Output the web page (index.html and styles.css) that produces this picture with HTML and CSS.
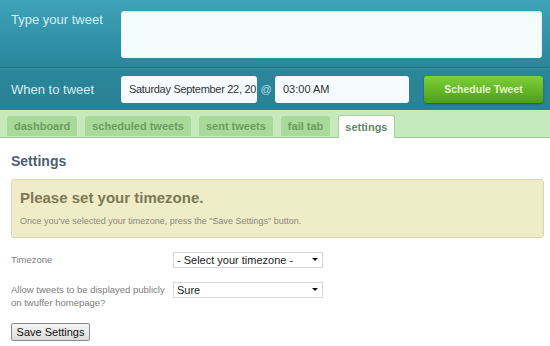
FILE: index.html
```html
<!DOCTYPE html>
<html lang="en">
  <head>
    <meta charset="UTF-8" />
    <title>twuffer - Settings</title>
    <link rel="stylesheet" href="styles.css">
  </head>
  <body>
    <div class="compose">
      <div class="compose-row tweet-row">
        <label class="compose-label">Type your tweet</label>
        <textarea class="tweet-box"></textarea>
      </div>
      <div class="compose-row when-row">
        <label class="compose-label">When to tweet</label>
        <input class="field date-field" type="text" value="Saturday September 22, 2012">
        <span class="at">@</span>
        <input class="field time-field" type="text" value="03:00 AM">
        <button class="schedule-btn">Schedule Tweet</button>
      </div>
    </div>

    <div class="tabs">
      <a class="tab">dashboard</a>
      <a class="tab">scheduled tweets</a>
      <a class="tab">sent tweets</a>
      <a class="tab">fail tab</a>
      <a class="tab active">settings</a>
    </div>

    <div class="content">
      <h2>Settings</h2>

      <div class="notice">
        <h3>Please set your timezone.</h3>
        <p>Once you've selected your timezone, press the "Save Settings" button.</p>
      </div>

      <div class="form-row">
        <div class="form-label">Timezone</div>
        <div class="select">- Select your timezone -<span class="arrow"></span></div>
      </div>
      <div class="form-row">
        <div class="form-label">Allow tweets to be displayed publicly on twuffer homepage?</div>
        <div class="select">Sure<span class="arrow"></span></div>
      </div>

      <button class="save-btn">Save Settings</button>
    </div>
  </body>
</html>
```

FILE: styles.css
```css
body {
  margin: 0;
  font-family: Arial, "Liberation Sans", sans-serif;
  background-color: #fff;
  width: 550px;
  overflow: hidden;
}
.compose {
  background: linear-gradient(#3fa3b9, #2a879c 65px, #2b8194);
}
.compose-row {
  display: flex;
  padding-left: 11px;
}
.tweet-row {
  padding-top: 11px;
  height: 56px;
  border-bottom: 1px solid #1f6f80;
  box-shadow: 0 1px 0 #3a93a6;
}
.when-row {
  align-items: center;
  height: 42px;
}
.compose-label {
  width: 110px;
  color: #d6eef3;
  font-size: 13px;
}
.tweet-row .compose-label {
  padding-top: 1px;
}
.tweet-box {
  width: 421px;
  height: 47px;
  margin: 0;
  padding: 0;
  border: none;
  resize: none;
  background-color: #f4fbfd;
  border-radius: 3px;
  box-shadow: inset 0 1px 2px rgba(0, 0, 0, 0.15);
}
.field {
  height: 27px;
  margin: 0;
  border: none;
  background-color: #f6fbfd;
  border-radius: 3px;
  font-family: Arial, "Liberation Sans", sans-serif;
  font-size: 11px;
  color: #333;
  padding: 0 0 0 8px;
  box-sizing: border-box;
}
.date-field {
  width: 136px;
  letter-spacing: -0.3px;
}
.at {
  width: 18px;
  text-align: center;
  color: #b4dde6;
  font-size: 11px;
}
.time-field {
  width: 134px;
}
.schedule-btn {
  margin-left: 15px;
  width: 119px;
  height: 27px;
  border: none;
  border-radius: 3px;
  background: linear-gradient(#7ed03a, #4e9e17);
  color: #e2f3d2;
  font-family: Arial, "Liberation Sans", sans-serif;
  font-weight: bold;
  font-size: 10.5px;
  box-shadow: 0 1px 2px rgba(0, 0, 0, 0.35);
}
.tabs {
  display: flex;
  gap: 8px;
  background-color: #c6eabc;
  padding: 6px 0 0 7px;
  height: 21px;
  border-bottom: 1px solid #9ccb8e;
}
.tab {
  background-color: #a9d99b;
  color: #6b9d62;
  font-family: Arial, "Liberation Sans", sans-serif;
  font-weight: bold;
  font-size: 11px;
  padding: 0 7px;
  height: 20px;
  line-height: 20px;
  border-radius: 3px 3px 0 0;
}
.tab.active {
  background-color: #fff;
  color: #5f8a6a;
  border: 1px solid #a6d398;
  border-bottom: none;
  padding: 0 6px;
  height: 22px;
  line-height: 22px;
  margin-top: -1px;
  margin-bottom: -1px;
}
.content {
  padding: 0 6px 0 11px;
}
h2 {
  margin: 15px 0 10px;
  font-size: 14px;
  color: #4b6170;
}
.notice {
  background-color: #efecc8;
  border: 1px solid #dcd8ac;
  border-radius: 3px;
  padding: 9px 8px 11px;
  margin-bottom: 14px;
}
.notice h3 {
  margin: 0 0 10px;
  font-size: 15px;
  color: #7b7a55;
}
.notice p {
  margin: 0;
  font-size: 9px;
  color: #8a8a78;
}
.form-row {
  display: flex;
  align-items: flex-start;
  margin-bottom: 14px;
  font-size: 9.5px;
}
.form-label {
  width: 156px;
  margin-right: 6px;
  color: #7d7d7d;
  line-height: 13px;
  padding-top: 1px;
}
.select {
  position: relative;
  width: 150px;
  height: 16px;
  line-height: 15px;
  box-sizing: border-box;
  border: 1px solid #d8d8d8;
  padding-left: 3px;
  font-size: 11px;
  color: #222;
}
.arrow {
  position: absolute;
  right: 4px;
  top: 5px;
  border-left: 3px solid transparent;
  border-right: 3px solid transparent;
  border-top: 3px solid #111;
}
.save-btn {
  display: block;
  width: 79px;
  height: 18px;
  padding: 0;
  font-family: Arial, "Liberation Sans", sans-serif;
  font-size: 11px;
  color: #111;
  border: 1px solid #8a8a8a;
  border-radius: 2px;
  background: linear-gradient(#f6f6f6, #dcdcdc);
}
```
